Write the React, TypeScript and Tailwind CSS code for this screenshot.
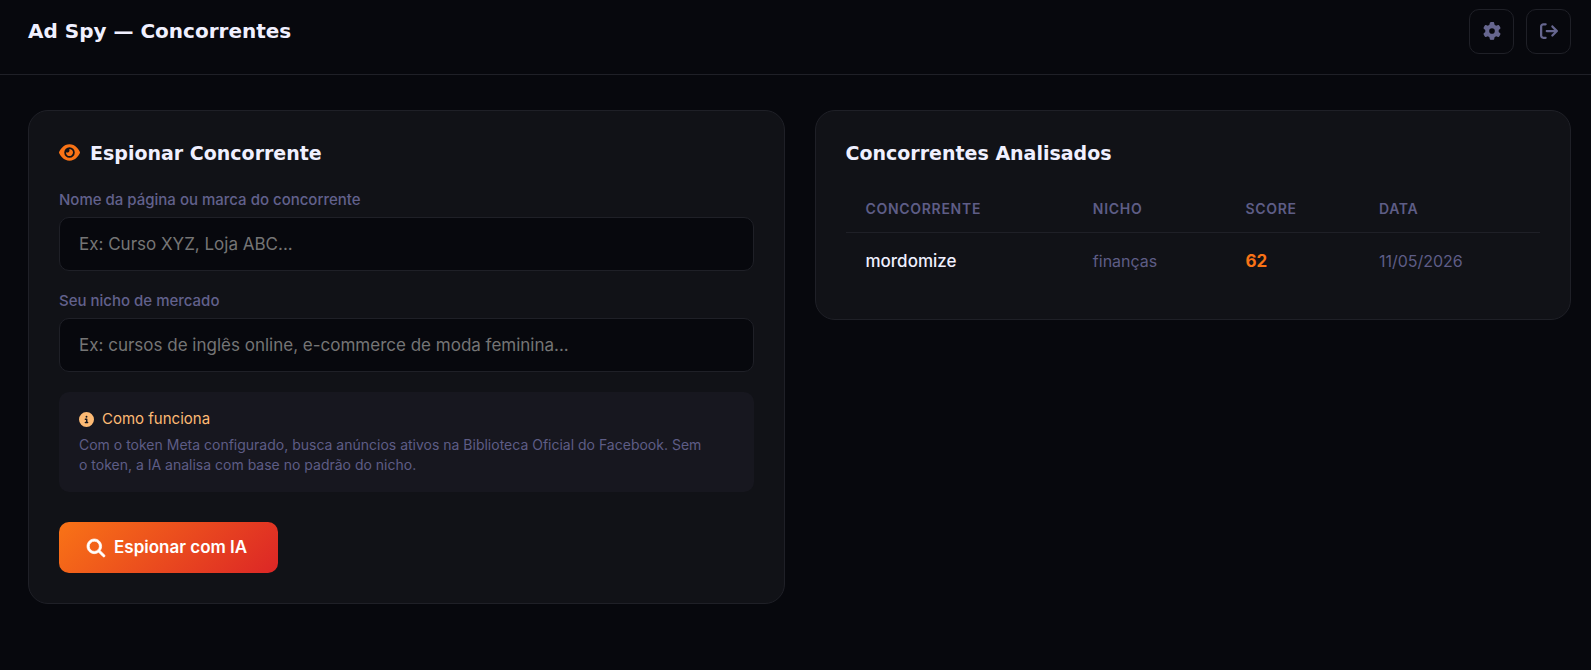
import { useState } from "react";
import type { FormEvent, InputHTMLAttributes } from "react";
import { FaArrowRightFromBracket, FaCircleInfo, FaEye, FaGear, FaMagnifyingGlass } from "react-icons/fa6";

type Competitor = {
  name: string;
  niche: string;
  score: number;
  date: string;
};

const competitors: Competitor[] = [{ name: "mordomize", niche: "finanças", score: 62, date: "11/05/2026" }];

const headingFont = "font-['DejaVu_Sans',sans-serif] font-bold text-[#f0f0ff]";
const iconButton =
  "flex size-[45px] items-center justify-center rounded-[10px] border border-[#1f2027] pb-px text-[18px] text-[#66668f] transition hover:text-white";
const card = "rounded-[20px] border border-[#1f2027] bg-[#111217] p-[30px]";

type FieldProps = InputHTMLAttributes<HTMLInputElement> & { id: string; label: string };

function Field({ id, label, ...props }: FieldProps) {
  return (
    <div className="mb-5">
      <label htmlFor={id} className="mb-[7px] block text-[15px] leading-5 font-medium text-[#62618c]">
        {label}
      </label>
      <input
        id={id}
        type="text"
        className="block h-[54px] w-full rounded-[10px] border border-[#1f2027] bg-[#07080d] px-[19px] text-[17px] text-white outline-none placeholder:text-[#757575] focus:border-[#f97316]"
        {...props}
      />
    </div>
  );
}

function Header() {
  return (
    <header className="flex items-start justify-between border-b border-[#1f2027] pt-[9px] pr-5 pb-5 pl-7">
      <h1 className={`${headingFont} text-[20px] leading-[45px]`}>Ad Spy — Concorrentes</h1>
      <div className="flex gap-3">
        <button type="button" aria-label="Configurações" className={iconButton}>
          <FaGear />
        </button>
        <button type="button" aria-label="Sair" className={iconButton}>
          <FaArrowRightFromBracket />
        </button>
      </div>
    </header>
  );
}

function SpyForm() {
  const [name, setName] = useState("");
  const [niche, setNiche] = useState("");

  function handleSubmit(event: FormEvent) {
    event.preventDefault();
  }

  return (
    <form onSubmit={handleSubmit} className={card}>
      <h2 className={`${headingFont} mb-[25px] flex items-center gap-[10px] text-[19px] leading-6`}>
        <FaEye className="mb-[2px] text-[21px] text-[#f97316]" />
        Espionar Concorrente
      </h2>
      <Field
        id="name"
        label="Nome da página ou marca do concorrente"
        placeholder="Ex: Curso XYZ, Loja ABC..."
        value={name}
        onChange={(event) => setName(event.target.value)}
      />
      <Field
        id="niche"
        label="Seu nicho de mercado"
        placeholder="Ex: cursos de inglês online, e-commerce de moda feminina..."
        value={niche}
        onChange={(event) => setNiche(event.target.value)}
      />
      <div className="mb-[30px] rounded-[10px] bg-[#17171f] py-[17px] pr-11 pl-5">
        <p className="mb-[6px] flex items-center gap-2 text-[15px] leading-5 text-[#fdba74]">
          <FaCircleInfo />
          Como funciona
        </p>
        <p className="text-[14px] leading-5 text-[#5e5d86]">
          Com o token Meta configurado, busca anúncios ativos na Biblioteca Oficial do Facebook. Sem o token, a IA
          analisa com base no padrão do nicho.
        </p>
      </div>
      <button
        type="submit"
        className="flex h-[51px] items-center gap-[9px] rounded-[10px] bg-linear-135/srgb from-[#f97316] to-[#dc2626] pr-[31px] pl-7 text-[17px] font-semibold text-white"
      >
        <FaMagnifyingGlass strokeWidth={20} className="overflow-visible text-[18px]" />
        Espionar com IA
      </button>
    </form>
  );
}

function CompetitorTable() {
  return (
    <section className={card}>
      <h2 className={`${headingFont} mb-[21px] text-[19px] leading-6`}>Concorrentes Analisados</h2>
      <table className="w-full text-left">
        <thead>
          <tr className="border-b border-[#1f2027] text-[14px] leading-5 tracking-wider text-[#5e5d86] uppercase">
            <th className="px-5 py-[13px] font-semibold">Concorrente</th>
            <th className="px-5 py-[13px] font-semibold">Nicho</th>
            <th className="px-5 py-[13px] font-semibold">Score</th>
            <th className="px-5 py-[13px] font-semibold">Data</th>
          </tr>
        </thead>
        <tbody>
          {competitors.map((item) => (
            <tr key={item.name} className="text-[16px] leading-6 text-[#5e5d86]">
              <td className="px-5 py-4 text-[17px] font-medium text-[#f0f0ff]">{item.name}</td>
              <td className="px-5 py-4">{item.niche}</td>
              <td className="px-5 py-4 text-[17px] font-bold text-[#f97316]">{item.score}</td>
              <td className="px-5 py-4">{item.date}</td>
            </tr>
          ))}
        </tbody>
      </table>
    </section>
  );
}

export default function App() {
  return (
    <div className="min-h-screen bg-[#07080d] font-['Inter',sans-serif]">
      <Header />
      <main className="grid grid-cols-1 items-start gap-[30px] pt-[35px] pr-5 pb-8 pl-7 md:grid-cols-2">
        <SpyForm />
        <CompetitorTable />
      </main>
    </div>
  );
}
